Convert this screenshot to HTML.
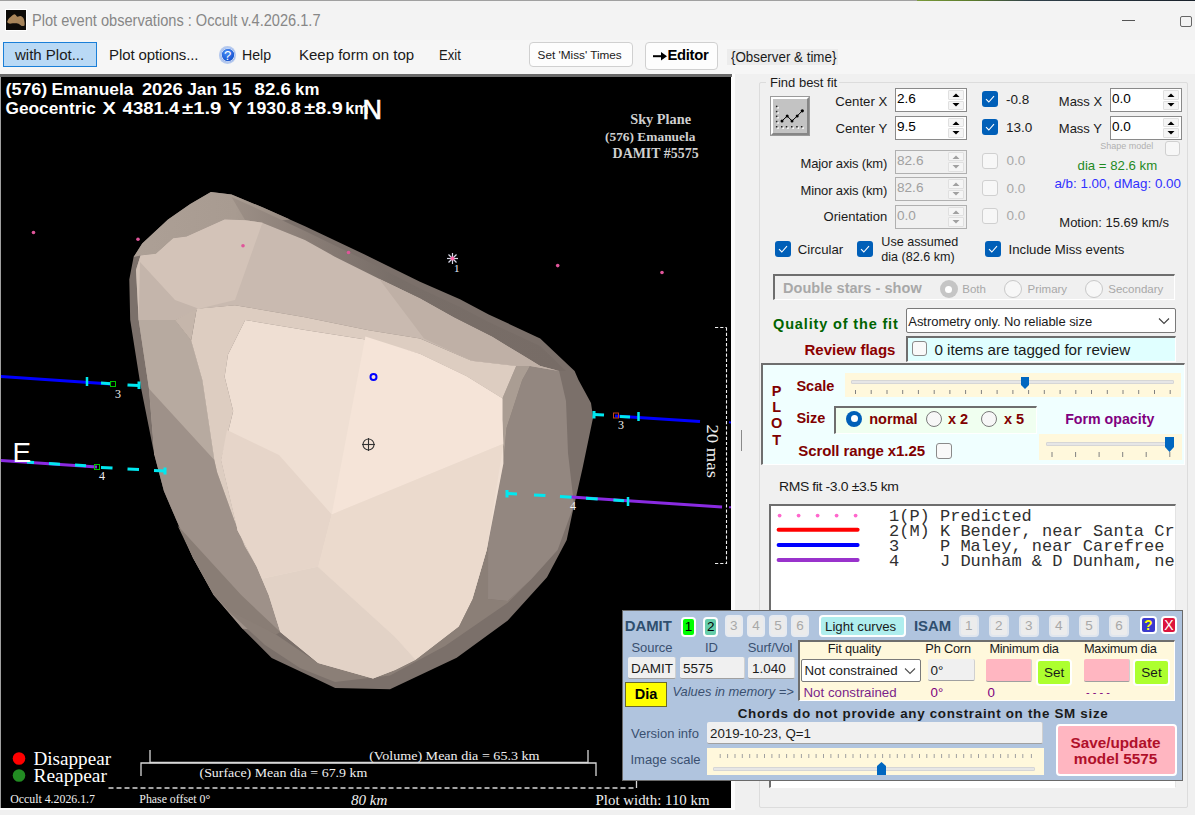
<!DOCTYPE html>
<html><head><meta charset="utf-8">
<style>
html,body{margin:0;padding:0}
body{width:1195px;height:815px;overflow:hidden;position:relative;background:#f0f0f0;font-family:"Liberation Sans",sans-serif;color:#000}
.a{position:absolute}
.t{position:absolute;white-space:pre;line-height:1}
svg text{white-space:pre}
</style></head><body>
<div class="a" style="left:0px;top:0px;width:1195px;height:1px;background:#a0a0a0;"></div>
<div class="a" style="left:917px;top:0px;width:278px;height:2px;background:linear-gradient(90deg,#7a9a3a 0%,#5a7a2a 20%,#30404a 40%,#18202a 100%);"></div>
<div class="a" style="left:0px;top:1px;width:1195px;height:39px;background:#f3f3f3;"></div>
<div class="a" style="left:5px;top:9px;width:22px;height:22px;background:#fff;"></div>
<div class="a" style="left:6px;top:10px;width:20px;height:20px;background:#0d0b08;"></div>
<svg class="a" style="left:6px;top:10px" width="20" height="20"><defs><linearGradient id="icg" x1="0" y1="0" x2="1" y2="1"><stop offset="0" stop-color="#b08a5c"/><stop offset="1" stop-color="#a08058"/></linearGradient></defs><path d="M1.2 11.8 C2 9.5 3 8 4 7.4 C5.5 6 7 4.5 8.3 4.2 C9.3 4.2 9.8 5 10.1 5.4 C10.7 6.3 11.3 6.8 11.8 6.8 C12.5 6.5 13.5 6 14.5 6 C15.6 6.3 16.6 7 17.1 7.7 C18 9 18.5 11 18.6 12.7 C18.8 14 18.6 15.2 18.3 15.7 C17.5 16.2 16.3 16.1 15.7 16 C14.3 15.3 13 14 12.1 13.6 C11 13.3 10.5 13.3 9.8 13.3 C8.5 13.3 7.5 13.2 6.8 13.3 C5.5 13.5 4.2 13.7 3.3 13.6 C2.2 13.3 1.5 12.8 1.2 11.8Z" fill="url(#icg)"/></svg>
<div class="t" style="top:12.66px;font-size:16px;color:#878787;font-family:'Liberation Sans',sans-serif;left:32.4px;transform:scaleX(0.912);transform-origin:0 0;">Plot event observations : Occult v.4.2026.1.7</div>
<div class="a" style="left:1121.5px;top:20px;width:13px;height:1px;background:#555;"></div>
<div class="a" style="left:1180px;top:15.5px;width:12px;height:11.5px;background:none;border:1px solid #666;border-radius:2px;box-sizing:border-box"></div>
<div class="a" style="left:0px;top:40px;width:1195px;height:34px;background:#f6f6f6;"></div>
<div class="a" style="left:3px;top:42px;width:94px;height:25px;background:#b9d9f5;border:1px solid #1a7fd8;box-sizing:border-box"></div>
<div class="t" style="top:47.30px;font-size:15px;color:#1a1a1a;font-family:'Liberation Sans',sans-serif;left:15px;">with Plot...</div>
<div class="t" style="top:47.30px;font-size:15px;color:#1a1a1a;font-family:'Liberation Sans',sans-serif;letter-spacing:-0.1px;left:109px;">Plot options...</div>
<div class="a" style="left:218.8px;top:46.3px;width:17.5px;height:17.5px;border-radius:50%;background:#b5c9ee"></div>
<div class="a" style="left:220.5px;top:48px;width:14px;height:14px;border-radius:50%;background:radial-gradient(circle at 40% 30%,#4d8ff5 0%,#1f5fd8 55%,#0f3fae 100%);box-shadow:0 0 0 0.8px #e8eefa inset"></div>
<div class="t" style="top:49.30px;font-size:13px;color:#fff;font-family:'Liberation Sans',sans-serif;left:227.6px;transform:translateX(-50%);">?</div>
<div class="t" style="top:46.50px;font-size:15px;color:#1a1a1a;font-family:'Liberation Sans',sans-serif;left:241.5px;transform:scaleX(0.945);transform-origin:0 0;">Help</div>
<div class="t" style="top:47.30px;font-size:15px;color:#1a1a1a;font-family:'Liberation Sans',sans-serif;left:299px;">Keep form on top</div>
<div class="t" style="top:47.30px;font-size:15px;color:#1a1a1a;font-family:'Liberation Sans',sans-serif;left:438.6px;transform:scaleX(0.87);transform-origin:0 0;">Exit</div>
<div class="a" style="left:529px;top:42px;width:104px;height:25px;background:#fdfdfd;border:1px solid #d0d0d0;border-radius:4px;box-sizing:border-box"></div>
<div class="t" style="top:49.05px;font-size:11.75px;color:#1a1a1a;font-family:'Liberation Sans',sans-serif;left:537.6px;">Set 'Miss' Times</div>
<div class="a" style="left:645px;top:42px;width:73px;height:28px;background:#fdfdfd;border:1px solid #d0d0d0;border-radius:4px;box-sizing:border-box"></div>
<svg class="a" style="left:652px;top:48.8px" width="16" height="14"><path d="M1 7.2 H12" stroke="#000" stroke-width="2"/><path d="M9 3 L15 7.2 L9 11.4Z" fill="#000"/></svg>
<div class="t" style="top:48.47px;font-size:14.8px;color:#000;font-family:'Liberation Sans',sans-serif;font-weight:bold;letter-spacing:-0.3px;left:667.5px;">Editor</div>
<div class="a" style="left:727px;top:49.2px;width:111px;height:15.5px;background:#ececec;"></div>
<div class="t" style="top:49.30px;font-size:15px;color:#1a1a1a;font-family:'Liberation Sans',sans-serif;left:730.5px;transform:scaleX(0.89);transform-origin:0 0;">{Observer &amp; time}</div>
<div class="a" style="left:0px;top:74px;width:735px;height:736px;background:#fcfcfc;"></div>
<div class="a" style="left:0px;top:74px;width:732px;height:3px;background:#6a6a6a;"></div>
<div class="a" style="left:0px;top:77px;width:1px;height:731px;background:#a0a0a0;"></div>
<div class="a" style="left:1px;top:77px;width:730px;height:730.5px;background:#000;overflow:hidden">
<svg class="a" style="left:-1px;top:-77px" width="1195" height="815">
<!-- silhouette -->
<polygon fill="#7b706a" points="210.9,191.9 231.5,194.4 262.4,207.3 305,226.2 368.7,256.4 420,281.7 460,299.3 488.7,314.4 540.2,338.4 574.6,371 578.5,380 591,403 593.1,417.6 582.7,467.6 572.3,513.6 566.7,540 547,577.3 507.8,620.5 456.7,657.8 390,689.2 335.2,688 310,676 271.7,657.9 242.5,628.7 213.7,595 193.1,558.1 179.4,527.1 163.9,491.1 154.4,455 140.5,385.3 130.2,320 129.3,279.5 133.6,257.1 142.2,243.4 168,219.4 190.3,203.9"/>
<defs>
<linearGradient id="capg" x1="130" y1="0" x2="320" y2="0" gradientUnits="userSpaceOnUse"><stop offset="0" stop-color="#ada096"/><stop offset="0.55" stop-color="#a89b91"/><stop offset="1" stop-color="#8e8279"/></linearGradient>
<linearGradient id="rimg" x1="230" y1="0" x2="560" y2="0" gradientUnits="userSpaceOnUse"><stop offset="0" stop-color="#9d9087"/><stop offset="0.25" stop-color="#887c75"/><stop offset="0.5" stop-color="#786e68"/><stop offset="1" stop-color="#776c66"/></linearGradient>
</defs>
<!-- top-left cap rim -->
<polygon fill="url(#capg)" points="133.6,257.1 142.2,243.4 168,219.4 190.3,203.9 210.9,191.9 231.5,194.4 262.4,207.3 290,219.5 262.4,222.8 245.2,220.2 224.6,219.4 186.8,236.5 173.1,238.2 155.9,253.7 140.5,255.4"/>
<!-- top rim inner tone -->
<polygon fill="url(#rimg)" points="231.5,197 262.4,211 305,231 368.7,262 420,288.5 460,307 488.7,322 540.2,346 566,371 559.1,371 540.2,365.9 523,355.6 492.1,336.7 454.4,317.8 420,298.5 379,278.7 334.4,256.4 305,240 262.4,222.8 245.2,220.2"/>
<!-- left outer dark strip + medium band -->
<polygon fill="#b7aaa0" points="140.5,255.4 155.9,253.7 173.1,238.2 186.8,236.5 200,262 174.8,320 191.1,340.6 202.3,380 214.3,460 205.1,455 149,388.7 138.7,320 136,270"/>
<polygon fill="#b7aaa0" points="138.7,320 174.8,320 191.1,340.6 202.3,380 214.3,460 154.4,455 149,388.7"/>
<polygon fill="#9e9189" points="149,388.7 214.3,460 217.1,472.2 234.3,520.3 244.6,546 256.6,566.6 268.7,595 280.3,632.1 242.5,628.7 213.7,595 193.1,558.1 179.4,527.1 163.9,491.1 154.4,455"/>
<polygon fill="#897d75" points="177.6,525.4 241.2,595 280.3,632.1 276,634.5 232.2,615 213.7,595 193.1,558.1"/>
<!-- bottom rim inner -->
<polygon fill="#8b7f77" points="226,609 276,634.5 318.1,663.1 373,678.5 395,670 415.5,659.7 458.7,626.4 472.4,598.9 488.2,540 490,540 488,598.9 507.8,600.9 531.3,579.3 507.8,602.8 445,646 390,675.5 335,682 300,668 265,645"/>
<!-- right medium-dark region -->
<polygon fill="#938780" points="522.2,380 530,365.9 559.1,371 566,400.9 568,453 574,505 557.6,550 531.3,579.3 507.8,600.9 488,598.9 488.2,540 486.7,550 503.4,463.5 506.5,428"/>
<polygon fill="#aa9d93" points="502.4,398.5 516.2,365.9 530,365.9 522.2,380 506.5,428 503.4,463.5 486.7,550 472.4,598.9 458.7,626.4 488.2,540 502.4,420"/>
<!-- upper medium band -->
<polygon fill="#c9bab0" points="186.8,236.5 224.6,219.4 245.2,220.2 262.4,222.8 305,240 334.4,256.4 379,278.7 420,298.5 454.4,317.8 492.1,336.7 523,355.6 540.2,365.9 559.1,371 530,366 516.2,365.9 471.5,360.7 420,338.4 368.7,330.3 305,317.3 234.9,305.2 198.9,308.7 174.8,320 200,262"/>
<polygon fill="#d3c3b8" points="140.5,255.4 155.9,253.7 173.1,238.2 186.8,236.5 224.6,219.4 245.2,220.2 262.4,222.8 235,300 198.9,308.7 174.8,320 138.7,320 136,270"/>
<polygon fill="#bfb0a6" points="379,278.7 420,298.5 454.4,317.8 492.1,336.7 523,355.6 540.2,365.9 559.1,371 530,366 516.2,365.9 471.5,360.7 424,338.5"/>
<polygon fill="#c4b5ab" points="140,262 175,300 198.9,308.7 174.8,320 138.7,320"/>
<!-- lighter band -->
<polygon fill="#ddcdc1" points="196.7,308.8 234.9,305.2 305,317.3 368.7,330.3 420,338.4 471.5,360.7 516.2,365.9 502.4,398.5 466.4,376.2 420,353.9 368.7,340 305,330 245.2,320 228,354.4 224.6,376.7 233.2,411 221.2,460 237.7,530.6 256.6,566.6 244.6,546 234.3,520.3 217.1,472.2 214.3,460 202.3,380 191.1,340.6 192.4,333.4"/>
<polygon fill="#c5b6ab" points="174.8,320 196.7,308.8 192.4,333.4 191.1,340.6"/>
<!-- bright region -->
<polygon fill="#efdfd3" points="245.2,320 305,330 368.7,340 420,353.9 466.4,376.2 502.4,398.5 502.4,420 503.4,463.5 486.7,550 472.4,598.9 458.7,626.4 415.5,659.7 395,670 373,678.5 318.1,663.1 280.3,632.1 268.7,595 256.6,566.6 237.7,530.6 221.2,460 233.2,411 224.6,376.7 228,354.4"/>
<!-- interior facets -->
<polygon fill="#f5e4d8" points="365.4,336.4 420,353.9 466.4,376.2 502.4,398.5 502.4,420 503.4,443.8 331.7,514.4"/>
<polygon fill="#e6d5c9" points="221.2,460 227,430 279,455 331.7,514.4 318.5,566.6 261.8,578.7 256.6,566.6 237.7,530.6"/>
<polygon fill="#ebdacd" points="331.7,514.4 503.4,443.8 486.7,550 472.4,598.9 458.7,626.4 415.5,659.7 395,637 318,567"/>
<polygon fill="#e2d2c6" points="261.8,578.7 318.5,566.6 318,567 395,637 415.5,659.7 395,670 373,678.5 318.1,663.1 280.3,632.1 268.7,595"/>
<!-- predicted path dots -->
<g fill="#e0559a">
<circle cx="33.5" cy="232.5" r="1.8"/><circle cx="138" cy="239.3" r="1.8"/><circle cx="243" cy="245.8" r="1.8"/><circle cx="348.5" cy="252.5" r="1.8"/><circle cx="557.7" cy="265.6" r="1.8"/><circle cx="662" cy="272.5" r="1.8"/>
</g>
<!-- star -->
<g stroke="#d8d8e8" stroke-width="1.2"><line x1="447" y1="258.5" x2="458" y2="258.5"/><line x1="452.5" y1="253" x2="452.5" y2="264"/><line x1="448.5" y1="254.5" x2="456.5" y2="262.5"/><line x1="456.5" y1="254.5" x2="448.5" y2="262.5"/></g>
<circle cx="452.5" cy="258.5" r="2" fill="#ff66aa"/>
<text x="454" y="272" font-family="Liberation Serif" font-size="11" fill="#e8f0ff">1</text>
<!-- center markers -->
<circle cx="373.5" cy="377" r="3" fill="none" stroke="#0000ff" stroke-width="2"/>
<g stroke="#333" stroke-width="1.1" fill="none"><circle cx="368.5" cy="444.5" r="5.5"/><line x1="362" y1="444.5" x2="375" y2="444.5"/><line x1="368.5" y1="438" x2="368.5" y2="451"/></g>
<!-- chord 3 left (blue) -->
<line x1="0" y1="376.5" x2="111" y2="384" stroke="#0000ff" stroke-width="3"/>
<line x1="101" y1="383" x2="111" y2="383.8" stroke="#00e8f0" stroke-width="3"/>
<line x1="87" y1="377" x2="87" y2="386" stroke="#00e8f0" stroke-width="2.5"/>
<rect x="110.5" y="381.5" width="5" height="5" fill="none" stroke="#00c000" stroke-width="1"/>
<line x1="127.5" y1="385" x2="139" y2="385.6" stroke="#00e8f0" stroke-width="3"/>
<line x1="139" y1="381.5" x2="139" y2="389" stroke="#00e8f0" stroke-width="3"/>
<text x="115" y="397.5" font-family="Liberation Serif" font-size="12" fill="#f0f0f0">3</text>
<!-- chord 4 left (purple) -->
<line x1="0" y1="460.5" x2="97" y2="467" stroke="#8a2be2" stroke-width="3"/>
<g stroke="#00e8f0" stroke-width="3"><line x1="27" y1="462" x2="34" y2="462.5"/><line x1="49" y1="463.5" x2="60" y2="464.2"/><line x1="75" y1="465" x2="86" y2="465.8"/><line x1="101" y1="467.5" x2="112.5" y2="468"/><line x1="127.5" y1="469" x2="139" y2="469.5"/><line x1="154" y1="470.5" x2="165" y2="471"/><line x1="165" y1="467.5" x2="165" y2="474.5"/></g>
<rect x="94.5" y="464.5" width="5" height="5" fill="none" stroke="#00c000" stroke-width="1"/>
<text x="99" y="480" font-family="Liberation Serif" font-size="12" fill="#f0f0f0">4</text>
<!-- chord 3 right -->
<line x1="615" y1="416" x2="700" y2="421.5" stroke="#0000ff" stroke-width="3"/>
<g stroke="#00e8f0" stroke-width="3"><line x1="594" y1="414.5" x2="604" y2="415"/><line x1="620" y1="416.5" x2="630" y2="417"/></g>
<line x1="594" y1="411" x2="594" y2="418.5" stroke="#00e8f0" stroke-width="3"/>
<line x1="638.5" y1="412" x2="638.5" y2="421" stroke="#00e8f0" stroke-width="2.5"/>
<rect x="613.5" y="413" width="5" height="5" fill="none" stroke="#c04020" stroke-width="1"/>
<text x="618" y="429" font-family="Liberation Serif" font-size="12" fill="#f0f0f0">3</text>
<!-- chord 4 right -->
<line x1="571" y1="497" x2="722" y2="507" stroke="#8a2be2" stroke-width="3"/>
<g stroke="#00e8f0" stroke-width="3"><line x1="507" y1="493.5" x2="517" y2="494"/><line x1="534" y1="495" x2="545.4" y2="495.6"/><line x1="560" y1="496.5" x2="571.6" y2="497.2"/><line x1="586" y1="498.2" x2="597.7" y2="499"/><line x1="613.4" y1="500" x2="624" y2="500.8"/></g>
<line x1="507" y1="490" x2="507" y2="497.5" stroke="#00e8f0" stroke-width="3"/>
<line x1="628" y1="497" x2="628" y2="506" stroke="#00e8f0" stroke-width="2.5"/>
<text x="570" y="510" font-family="Liberation Serif" font-size="12" fill="#f0f0f0">4</text>
<!-- scale bar right -->
<g stroke="#f0f0f0" stroke-width="1.1" fill="none">
<line x1="726.5" y1="327.5" x2="726.5" y2="564" stroke-dasharray="3.2,2"/>
<line x1="715" y1="327.5" x2="726.5" y2="327.5" stroke-dasharray="3.2,2"/>
<line x1="715" y1="563.5" x2="726.5" y2="563.5" stroke-dasharray="3.2,2"/>
</g>
<line x1="729" y1="422.3" x2="731" y2="422.4" stroke="#0000ff" stroke-width="2"/><line x1="729" y1="507.2" x2="731" y2="507.3" stroke="#8a2be2" stroke-width="2"/>
<text transform="translate(706.5,424.5) rotate(90)" font-family="Liberation Serif" font-size="17" fill="#f0f0f0" textLength="53.4" lengthAdjust="spacingAndGlyphs">20 mas</text>
<!-- legend -->
<circle cx="19" cy="758.5" r="6.3" fill="#ff0000"/>
<circle cx="19" cy="775.5" r="6.3" fill="#228b22"/>
<text x="33.5" y="764.5" font-family="Liberation Serif" font-size="18.3" fill="#fff" textLength="77.5" lengthAdjust="spacingAndGlyphs">Disappear</text>
<text x="33.5" y="782" font-family="Liberation Serif" font-size="18.3" fill="#fff" textLength="73.5" lengthAdjust="spacingAndGlyphs">Reappear</text>
<!-- brackets -->
<g stroke="#d8d8d8" stroke-width="1.3" fill="none">
<polyline points="141,776 141,763 596,763 596,776"/>
<polyline points="150,750 150,762.5 588,762.5 588,750"/>
<polyline points="108.5,788 636.5,788" stroke-dasharray="5,3"/>
<line x1="636.5" y1="781" x2="636.5" y2="788"/>
</g>
<text x="199.5" y="776.5" font-family="Liberation Serif" font-size="13.5" fill="#f0f0f0" textLength="167.8" lengthAdjust="spacingAndGlyphs">(Surface) Mean dia = 67.9 km</text>
<text x="369.2" y="759.5" font-family="Liberation Serif" font-size="13.5" fill="#f0f0f0" textLength="170.3" lengthAdjust="spacingAndGlyphs">(Volume) Mean dia = 65.3 km</text>
<text x="10.2" y="802.5" font-family="Liberation Serif" font-size="12" fill="#f0f0f0" textLength="84.8" lengthAdjust="spacingAndGlyphs">Occult 4.2026.1.7</text>
<text x="139.3" y="802.5" font-family="Liberation Serif" font-size="12" fill="#f0f0f0" textLength="70.9" lengthAdjust="spacingAndGlyphs">Phase offset 0°</text>
<text x="351" y="804.5" font-family="Liberation Serif" font-size="15" font-style="italic" fill="#f0f0f0" textLength="36.4" lengthAdjust="spacingAndGlyphs">80 km</text>
<text x="595.6" y="804.5" font-family="Liberation Serif" font-size="15" fill="#f0f0f0" textLength="113.9" lengthAdjust="spacingAndGlyphs">Plot width: 110 km</text>
<!-- sky plane -->
<text x="630.2" y="123.8" font-family="Liberation Serif" font-size="15.5" font-weight="bold" fill="#d0d0d0" textLength="60.8" lengthAdjust="spacingAndGlyphs">Sky Plane</text>
<text x="605" y="141" font-family="Liberation Serif" font-size="13" font-weight="bold" fill="#d0d0d0" textLength="90.4" lengthAdjust="spacingAndGlyphs">(576) Emanuela</text>
<text x="612.6" y="158" font-family="Liberation Serif" font-size="14.5" font-weight="bold" fill="#d0d0d0" textLength="86" lengthAdjust="spacingAndGlyphs">DAMIT #5575</text>
<!-- header -->
<text x="5.5" y="94.7" font-family="Liberation Sans" font-size="16.3" font-weight="bold" fill="#fff" textLength="41.8" lengthAdjust="spacingAndGlyphs">(576)</text>
<text x="51.5" y="94.7" font-family="Liberation Sans" font-size="16.3" font-weight="bold" fill="#fff" textLength="81.9" lengthAdjust="spacingAndGlyphs">Emanuela</text>
<text x="141.9" y="94.7" font-family="Liberation Sans" font-size="16.3" font-weight="bold" fill="#fff" textLength="40.9" lengthAdjust="spacingAndGlyphs">2026</text>
<text x="187.2" y="94.7" font-family="Liberation Sans" font-size="16.3" font-weight="bold" fill="#fff" textLength="30.0" lengthAdjust="spacingAndGlyphs">Jan</text>
<text x="222.29999999999998" y="94.7" font-family="Liberation Sans" font-size="16.3" font-weight="bold" fill="#fff" textLength="19.2" lengthAdjust="spacingAndGlyphs">15</text>
<text x="254.6" y="94.7" font-family="Liberation Sans" font-size="16.3" font-weight="bold" fill="#fff" textLength="36.3" lengthAdjust="spacingAndGlyphs">82.6</text>
<text x="295.1" y="94.7" font-family="Liberation Sans" font-size="16.3" font-weight="bold" fill="#fff" textLength="24.3" lengthAdjust="spacingAndGlyphs">km</text>
<text x="5.5" y="114.2" font-family="Liberation Sans" font-size="16.3" font-weight="bold" fill="#fff" textLength="90.3" lengthAdjust="spacingAndGlyphs">Geocentric</text>
<text x="102.5" y="114.2" font-family="Liberation Sans" font-size="16.3" font-weight="bold" fill="#fff" textLength="13.4" lengthAdjust="spacingAndGlyphs">X</text>
<text x="122.6" y="114.2" font-family="Liberation Sans" font-size="16.3" font-weight="bold" fill="#fff" textLength="56.8" lengthAdjust="spacingAndGlyphs">4381.4</text>
<text x="182.1" y="114.2" font-family="Liberation Sans" font-size="16.3" font-weight="bold" fill="#fff" textLength="39.3" lengthAdjust="spacingAndGlyphs">±1.9</text>
<text x="228.2" y="114.2" font-family="Liberation Sans" font-size="16.3" font-weight="bold" fill="#fff" textLength="14.2" lengthAdjust="spacingAndGlyphs">Y</text>
<text x="246.6" y="114.2" font-family="Liberation Sans" font-size="16.3" font-weight="bold" fill="#fff" textLength="54.3" lengthAdjust="spacingAndGlyphs">1930.8</text>
<text x="304.3" y="114.2" font-family="Liberation Sans" font-size="16.3" font-weight="bold" fill="#fff" textLength="38.5" lengthAdjust="spacingAndGlyphs">±8.9</text>
<text x="345.3" y="114.2" font-family="Liberation Sans" font-size="16.3" font-weight="bold" fill="#fff" textLength="23.5" lengthAdjust="spacingAndGlyphs">km</text>
<text x="362.5" y="119.3" font-family="Liberation Sans" font-size="27.5" fill="#fff" stroke="#fff" stroke-width="0.7" textLength="19.5" lengthAdjust="spacingAndGlyphs">N</text>
<text x="12.5" y="462" font-family="Liberation Sans" font-size="28.5" fill="#fff" textLength="18.6" lengthAdjust="spacingAndGlyphs">E</text>
</svg>

</div>
<div class="a" style="left:741px;top:430px;width:1px;height:21px;background:#8a8a8a;"></div>
<div class="a" style="left:759px;top:82px;width:429px;height:726px;border:1px solid #dcdcdc;border-radius:2px;box-sizing:border-box"></div>
<div class="a" style="left:766px;top:76px;width:73px;height:12px;background:#f0f0f0;"></div>
<div class="t" style="top:75.50px;font-size:13px;color:#1a1a1a;font-family:'Liberation Sans',sans-serif;left:770px;transform:scaleX(1.0);transform-origin:0 0;">Find best fit</div>
<div class="a" style="left:770px;top:96.2px;width:39.5px;height:39.5px;background:#c3c3c3;border:1px solid #9a9a9a;box-sizing:border-box"></div>
<div class="a" style="left:771px;top:97.2px;width:37.5px;height:37.5px;border-top:2.5px solid #fff;border-left:2.5px solid #fff;border-right:2.5px solid #868686;border-bottom:2.5px solid #868686;box-sizing:border-box"></div>
<svg class="a" style="left:770px;top:96px" width="40" height="40">
<g fill="#fff"><rect x="7.2" y="11.0" width="1.6" height="1.6"/><rect x="7.2" y="16.1" width="1.6" height="1.6"/><rect x="7.2" y="20.9" width="1.6" height="1.6"/><rect x="7.2" y="26.1" width="1.6" height="1.6"/><rect x="7.2" y="31.3" width="1.6" height="1.6"/><rect x="12.3" y="31.3" width="1.6" height="1.6"/><rect x="17.1" y="31.3" width="1.6" height="1.6"/><rect x="22.3" y="31.3" width="1.6" height="1.6"/><rect x="27.5" y="31.3" width="1.6" height="1.6"/><rect x="32.2" y="31.3" width="1.6" height="1.6"/></g>
<g fill="#222"><rect x="5.9" y="9.7" width="1.5" height="1.5"/><rect x="5.9" y="14.8" width="1.5" height="1.5"/><rect x="5.9" y="19.6" width="1.5" height="1.5"/><rect x="5.9" y="24.8" width="1.5" height="1.5"/><rect x="5.9" y="30.0" width="1.5" height="1.5"/><rect x="11.0" y="30.0" width="1.5" height="1.5"/><rect x="15.8" y="30.0" width="1.5" height="1.5"/><rect x="21.0" y="30.0" width="1.5" height="1.5"/><rect x="26.2" y="30.0" width="1.5" height="1.5"/><rect x="30.9" y="30.0" width="1.5" height="1.5"/></g>
<polyline points="12,25 17.2,20 22,25 27.2,20 32.3,14.8" fill="none" stroke="#000" stroke-width="1"/>
<g fill="#000"><circle cx="12" cy="25" r="1.5"/><circle cx="17.2" cy="20" r="1.5"/><circle cx="22" cy="25" r="1.5"/><circle cx="27.2" cy="20" r="1.5"/><circle cx="32.3" cy="14.8" r="1.6"/></g>
</svg>
<div class="t" style="top:94.83px;font-size:13.2px;color:#1a1a1a;font-family:'Liberation Sans',sans-serif;right:307.70000000000005px;">Center X</div>
<div class="t" style="top:122.13px;font-size:13.2px;color:#1a1a1a;font-family:'Liberation Sans',sans-serif;right:307.70000000000005px;">Center Y</div>
<div class="t" style="top:156.60px;font-size:13px;color:#1a1a1a;font-family:'Liberation Sans',sans-serif;letter-spacing:-0.15px;right:307.79999999999995px;">Major axis (km)</div>
<div class="t" style="top:183.70px;font-size:13px;color:#1a1a1a;font-family:'Liberation Sans',sans-serif;letter-spacing:-0.15px;right:307.79999999999995px;">Minor axis (km)</div>
<div class="t" style="top:210.20px;font-size:13px;color:#1a1a1a;font-family:'Liberation Sans',sans-serif;right:307.79999999999995px;">Orientation</div>
<div class="a" style="left:895px;top:88px;width:72px;height:24px;background:#fff;border:1px solid #8a8a8a;box-sizing:border-box"></div>
<div class="a" style="left:948px;top:90px;width:16px;height:9.5px;background:#f5f5f5;border:1px solid #e0e0e0;box-sizing:border-box;border-radius:1px"></div>
<div class="a" style="left:948px;top:100.5px;width:16px;height:9.5px;background:#f5f5f5;border:1px solid #e0e0e0;box-sizing:border-box;border-radius:1px"></div>
<svg class="a" style="left:948px;top:90px" width="16" height="20"><path d="M4.5 7 L8 3.5 L11.5 7Z" fill="#000"/><path d="M4.5 13 L8 16.5 L11.5 13Z" fill="#000"/></svg>
<div class="t" style="top:92.09px;font-size:13.6px;color:#000;font-family:'Liberation Sans',sans-serif;left:897px;">2.6</div>
<div class="a" style="left:895px;top:115.5px;width:72px;height:24px;background:#fff;border:1px solid #8a8a8a;box-sizing:border-box"></div>
<div class="a" style="left:948px;top:117.5px;width:16px;height:9.5px;background:#f5f5f5;border:1px solid #e0e0e0;box-sizing:border-box;border-radius:1px"></div>
<div class="a" style="left:948px;top:128.0px;width:16px;height:9.5px;background:#f5f5f5;border:1px solid #e0e0e0;box-sizing:border-box;border-radius:1px"></div>
<svg class="a" style="left:948px;top:117.5px" width="16" height="20"><path d="M4.5 7 L8 3.5 L11.5 7Z" fill="#000"/><path d="M4.5 13 L8 16.5 L11.5 13Z" fill="#000"/></svg>
<div class="t" style="top:119.59px;font-size:13.6px;color:#000;font-family:'Liberation Sans',sans-serif;left:897px;">9.5</div>
<div class="a" style="left:895px;top:149.5px;width:72px;height:24px;background:#f0f0f0;border:1px solid #b0b0b0;box-sizing:border-box"></div>
<div class="a" style="left:948px;top:151.5px;width:16px;height:9.5px;background:#f5f5f5;border:1px solid #e0e0e0;box-sizing:border-box;border-radius:1px"></div>
<div class="a" style="left:948px;top:162.0px;width:16px;height:9.5px;background:#f5f5f5;border:1px solid #e0e0e0;box-sizing:border-box;border-radius:1px"></div>
<svg class="a" style="left:948px;top:151.5px" width="16" height="20"><path d="M4.5 7 L8 3.5 L11.5 7Z" fill="#a0a0a0"/><path d="M4.5 13 L8 16.5 L11.5 13Z" fill="#a0a0a0"/></svg>
<div class="t" style="top:153.59px;font-size:13.6px;color:#a0a0a0;font-family:'Liberation Sans',sans-serif;left:897px;">82.6</div>
<div class="a" style="left:895px;top:177px;width:72px;height:24px;background:#f0f0f0;border:1px solid #b0b0b0;box-sizing:border-box"></div>
<div class="a" style="left:948px;top:179px;width:16px;height:9.5px;background:#f5f5f5;border:1px solid #e0e0e0;box-sizing:border-box;border-radius:1px"></div>
<div class="a" style="left:948px;top:189.5px;width:16px;height:9.5px;background:#f5f5f5;border:1px solid #e0e0e0;box-sizing:border-box;border-radius:1px"></div>
<svg class="a" style="left:948px;top:179px" width="16" height="20"><path d="M4.5 7 L8 3.5 L11.5 7Z" fill="#a0a0a0"/><path d="M4.5 13 L8 16.5 L11.5 13Z" fill="#a0a0a0"/></svg>
<div class="t" style="top:181.09px;font-size:13.6px;color:#a0a0a0;font-family:'Liberation Sans',sans-serif;left:897px;">82.6</div>
<div class="a" style="left:895px;top:204.5px;width:72px;height:24px;background:#f0f0f0;border:1px solid #b0b0b0;box-sizing:border-box"></div>
<div class="a" style="left:948px;top:206.5px;width:16px;height:9.5px;background:#f5f5f5;border:1px solid #e0e0e0;box-sizing:border-box;border-radius:1px"></div>
<div class="a" style="left:948px;top:217.0px;width:16px;height:9.5px;background:#f5f5f5;border:1px solid #e0e0e0;box-sizing:border-box;border-radius:1px"></div>
<svg class="a" style="left:948px;top:206.5px" width="16" height="20"><path d="M4.5 7 L8 3.5 L11.5 7Z" fill="#a0a0a0"/><path d="M4.5 13 L8 16.5 L11.5 13Z" fill="#a0a0a0"/></svg>
<div class="t" style="top:208.59px;font-size:13.6px;color:#a0a0a0;font-family:'Liberation Sans',sans-serif;left:897px;">0.0</div>
<div class="a" style="left:982px;top:91.3px;width:16px;height:16px;border-radius:3px;background:#005fb8"><svg width="16" height="16" style="position:absolute;left:0;top:0"><path d="M4 8.2 L6.8 11 L12 5.2" fill="none" stroke="#fff" stroke-width="1.1"/></svg></div>
<div class="a" style="left:982px;top:118.6px;width:16px;height:16px;border-radius:3px;background:#005fb8"><svg width="16" height="16" style="position:absolute;left:0;top:0"><path d="M4 8.2 L6.8 11 L12 5.2" fill="none" stroke="#fff" stroke-width="1.1"/></svg></div>
<div class="a" style="left:982px;top:153px;width:16px;height:16px;border-radius:3px;background:#f7f7f7;border:1px solid #d0d0d0;box-sizing:border-box"></div>
<div class="a" style="left:982px;top:180px;width:16px;height:16px;border-radius:3px;background:#f7f7f7;border:1px solid #d0d0d0;box-sizing:border-box"></div>
<div class="a" style="left:982px;top:207.5px;width:16px;height:16px;border-radius:3px;background:#f7f7f7;border:1px solid #d0d0d0;box-sizing:border-box"></div>
<div class="t" style="top:93.47px;font-size:13.5px;color:#1a1a1a;font-family:'Liberation Sans',sans-serif;left:1005.9px;">-0.8</div>
<div class="t" style="top:121.07px;font-size:13.5px;color:#1a1a1a;font-family:'Liberation Sans',sans-serif;left:1005.9px;">13.0</div>
<div class="t" style="top:154.17px;font-size:13.5px;color:#a8a8a8;font-family:'Liberation Sans',sans-serif;left:1006.4px;">0.0</div>
<div class="t" style="top:181.77px;font-size:13.5px;color:#a8a8a8;font-family:'Liberation Sans',sans-serif;left:1006.4px;">0.0</div>
<div class="t" style="top:208.67px;font-size:13.5px;color:#a8a8a8;font-family:'Liberation Sans',sans-serif;left:1006.4px;">0.0</div>
<div class="t" style="top:95.00px;font-size:13px;color:#1a1a1a;font-family:'Liberation Sans',sans-serif;left:1058.8px;">Mass X</div>
<div class="t" style="top:122.30px;font-size:13px;color:#1a1a1a;font-family:'Liberation Sans',sans-serif;left:1058.8px;">Mass Y</div>
<div class="a" style="left:1110px;top:88px;width:72px;height:24px;background:#fff;border:1px solid #8a8a8a;box-sizing:border-box"></div>
<div class="a" style="left:1163px;top:90px;width:16px;height:9.5px;background:#f5f5f5;border:1px solid #e0e0e0;box-sizing:border-box;border-radius:1px"></div>
<div class="a" style="left:1163px;top:100.5px;width:16px;height:9.5px;background:#f5f5f5;border:1px solid #e0e0e0;box-sizing:border-box;border-radius:1px"></div>
<svg class="a" style="left:1163px;top:90px" width="16" height="20"><path d="M4.5 7 L8 3.5 L11.5 7Z" fill="#000"/><path d="M4.5 13 L8 16.5 L11.5 13Z" fill="#000"/></svg>
<div class="t" style="top:92.09px;font-size:13.6px;color:#000;font-family:'Liberation Sans',sans-serif;left:1112px;">0.0</div>
<div class="a" style="left:1110px;top:115.5px;width:72px;height:24px;background:#fff;border:1px solid #8a8a8a;box-sizing:border-box"></div>
<div class="a" style="left:1163px;top:117.5px;width:16px;height:9.5px;background:#f5f5f5;border:1px solid #e0e0e0;box-sizing:border-box;border-radius:1px"></div>
<div class="a" style="left:1163px;top:128.0px;width:16px;height:9.5px;background:#f5f5f5;border:1px solid #e0e0e0;box-sizing:border-box;border-radius:1px"></div>
<svg class="a" style="left:1163px;top:117.5px" width="16" height="20"><path d="M4.5 7 L8 3.5 L11.5 7Z" fill="#000"/><path d="M4.5 13 L8 16.5 L11.5 13Z" fill="#000"/></svg>
<div class="t" style="top:119.59px;font-size:13.6px;color:#000;font-family:'Liberation Sans',sans-serif;left:1112px;">0.0</div>
<div class="t" style="top:142.38px;font-size:9px;color:#b0b0b0;font-family:'Liberation Sans',sans-serif;left:1100.3px;transform:scaleX(1.0);transform-origin:0 0;">Shape model</div>
<div class="a" style="left:1164.5px;top:141px;width:15px;height:15px;border-radius:3px;background:#f7f7f7;border:1px solid #d0d0d0;box-sizing:border-box"></div>
<div class="t" style="top:159.33px;font-size:13.2px;color:#1f8a1f;font-family:'Liberation Sans',sans-serif;left:1077.6px;">dia = 82.6 km</div>
<div class="t" style="top:177.16px;font-size:13.4px;color:#3030ff;font-family:'Liberation Sans',sans-serif;left:1054.4px;">a/b: 1.00, dMag: 0.00</div>
<div class="t" style="top:215.50px;font-size:13px;color:#1a1a1a;font-family:'Liberation Sans',sans-serif;left:1059.3px;">Motion: 15.69 km/s</div>
<div class="a" style="left:774.7px;top:241.2px;width:16px;height:16px;border-radius:3px;background:#005fb8"><svg width="16" height="16" style="position:absolute;left:0;top:0"><path d="M4 8.2 L6.8 11 L12 5.2" fill="none" stroke="#fff" stroke-width="1.1"/></svg></div>
<div class="t" style="top:242.83px;font-size:13.2px;color:#1a1a1a;font-family:'Liberation Sans',sans-serif;left:797.7px;">Circular</div>
<div class="a" style="left:857px;top:241.2px;width:16px;height:16px;border-radius:3px;background:#005fb8"><svg width="16" height="16" style="position:absolute;left:0;top:0"><path d="M4 8.2 L6.8 11 L12 5.2" fill="none" stroke="#fff" stroke-width="1.1"/></svg></div>
<div class="t" style="top:236.33px;font-size:12.6px;color:#1a1a1a;font-family:'Liberation Sans',sans-serif;left:881.3px;">Use assumed</div>
<div class="t" style="top:251.33px;font-size:12.6px;color:#1a1a1a;font-family:'Liberation Sans',sans-serif;left:881.3px;">dia (82.6 km)</div>
<div class="a" style="left:984.7px;top:241.3px;width:16px;height:16px;border-radius:3px;background:#005fb8"><svg width="16" height="16" style="position:absolute;left:0;top:0"><path d="M4 8.2 L6.8 11 L12 5.2" fill="none" stroke="#fff" stroke-width="1.1"/></svg></div>
<div class="t" style="top:242.83px;font-size:13.2px;color:#1a1a1a;font-family:'Liberation Sans',sans-serif;left:1008.6px;">Include Miss events</div>
<div class="a" style="left:772.5px;top:274px;width:402px;height:26px;background:#f0f0f0;border-top:2px solid #6e6e6e;border-left:2px solid #6e6e6e;border-bottom:1px solid #fff;border-right:1px solid #fff;box-sizing:border-box"></div>
<div class="t" style="top:281.23px;font-size:14.5px;color:#a8a8a8;font-family:'Liberation Sans',sans-serif;font-weight:bold;letter-spacing:0.05px;left:783px;">Double stars - show</div>
<div class="a" style="left:939.5px;top:280px;width:18px;height:18px;border-radius:50%;background:#c5c5c5;box-sizing:border-box"><div class="a" style="left:5.5px;top:5.5px;width:7px;height:7px;border-radius:50%;background:#fff"></div></div>
<div class="t" style="top:284.27px;font-size:11.5px;color:#a8a8a8;font-family:'Liberation Sans',sans-serif;left:962.3px;">Both</div>
<div class="a" style="left:1004px;top:280px;width:18px;height:18px;border-radius:50%;background:#f7f7f7;border:1px solid #c8c8c8;box-sizing:border-box"></div>
<div class="t" style="top:284.27px;font-size:11.5px;color:#a8a8a8;font-family:'Liberation Sans',sans-serif;left:1027.5px;">Primary</div>
<div class="a" style="left:1085px;top:280px;width:18px;height:18px;border-radius:50%;background:#f7f7f7;border:1px solid #c8c8c8;box-sizing:border-box"></div>
<div class="t" style="top:284.27px;font-size:11.5px;color:#a8a8a8;font-family:'Liberation Sans',sans-serif;left:1108.3px;">Secondary</div>
<div class="t" style="top:316.53px;font-size:14.5px;color:#006400;font-family:'Liberation Sans',sans-serif;font-weight:bold;letter-spacing:0.85px;left:773px;">Quality of the fit</div>
<div class="a" style="left:905.5px;top:308.3px;width:270px;height:25px;background:#fff;border:1px solid #7a7a7a;border-radius:2px;box-sizing:border-box"></div>
<div class="t" style="top:314.50px;font-size:13px;color:#1a1a1a;font-family:'Liberation Sans',sans-serif;letter-spacing:-0.05px;left:908.3px;">Astrometry only. No reliable size</div>
<svg class="a" style="left:1158px;top:316px" width="12" height="10"><path d="M1 2.5 L6 7.5 L11 2.5" fill="none" stroke="#404040" stroke-width="1.1"/></svg>
<div class="t" style="top:341.60px;font-size:15px;color:#8b0000;font-family:'Liberation Sans',sans-serif;font-weight:bold;right:299.6px;transform:scaleX(1.0);transform-origin:100% 0;">Review flags</div>
<div class="a" style="left:905.5px;top:335.5px;width:270px;height:26px;background:#e0ffff;border-top:2px solid #6e6e6e;border-left:2px solid #6e6e6e;border-bottom:1px solid #fff;border-right:1px solid #fff;box-sizing:border-box"></div>
<div class="a" style="left:912px;top:341px;width:15px;height:15px;border-radius:3px;background:#f9f9f9;border:1px solid #8a8a8a;box-sizing:border-box"></div>
<div class="t" style="top:341.63px;font-size:15.2px;color:#1a1a1a;font-family:'Liberation Sans',sans-serif;left:934.4px;">0 items are tagged for review</div>
<div class="a" style="left:761.4px;top:363.3px;width:424px;height:101.5px;background:#f0ffff;border-top:2px solid #6e6e6e;border-left:2px solid #6e6e6e;border-bottom:1px solid #fff;border-right:1px solid #fff;box-sizing:border-box"></div>
<div class="t" style="top:383.93px;font-size:14.5px;color:#800000;font-family:'Liberation Sans',sans-serif;font-weight:bold;left:776.6px;transform:translateX(-50%);">P</div>
<div class="t" style="top:400.43px;font-size:14.5px;color:#800000;font-family:'Liberation Sans',sans-serif;font-weight:bold;left:776.6px;transform:translateX(-50%);">L</div>
<div class="t" style="top:415.93px;font-size:14.5px;color:#800000;font-family:'Liberation Sans',sans-serif;font-weight:bold;left:776.6px;transform:translateX(-50%);">O</div>
<div class="t" style="top:432.63px;font-size:14.5px;color:#800000;font-family:'Liberation Sans',sans-serif;font-weight:bold;left:776.6px;transform:translateX(-50%);">T</div>
<div class="t" style="top:379.23px;font-size:14.5px;color:#800000;font-family:'Liberation Sans',sans-serif;font-weight:bold;left:796.4px;">Scale</div>
<div class="a" style="left:845px;top:373.4px;width:336px;height:24px;background:#fff8dc;"></div>
<div class="a" style="left:851px;top:380px;width:323px;height:4px;background:#e6e6e6;border:1px solid #d6d6d6;box-sizing:border-box;border-radius:1px"></div>
<svg class="a" style="left:845px;top:388px" width="336" height="9"><g stroke="#808080" stroke-width="1"><line x1="10.5" y1="2" x2="10.5" y2="6"/><line x1="26.2" y1="2" x2="26.2" y2="6"/><line x1="42.0" y1="2" x2="42.0" y2="6"/><line x1="57.7" y1="2" x2="57.7" y2="6"/><line x1="73.4" y1="2" x2="73.4" y2="6"/><line x1="89.2" y1="2" x2="89.2" y2="6"/><line x1="104.9" y1="2" x2="104.9" y2="6"/><line x1="120.6" y1="2" x2="120.6" y2="6"/><line x1="136.4" y1="2" x2="136.4" y2="6"/><line x1="152.1" y1="2" x2="152.1" y2="6"/><line x1="167.9" y1="2" x2="167.9" y2="6"/><line x1="183.6" y1="2" x2="183.6" y2="6"/><line x1="199.3" y1="2" x2="199.3" y2="6"/><line x1="215.1" y1="2" x2="215.1" y2="6"/><line x1="230.8" y1="2" x2="230.8" y2="6"/><line x1="246.5" y1="2" x2="246.5" y2="6"/><line x1="262.3" y1="2" x2="262.3" y2="6"/><line x1="278.0" y1="2" x2="278.0" y2="6"/><line x1="293.7" y1="2" x2="293.7" y2="6"/><line x1="309.5" y1="2" x2="309.5" y2="6"/><line x1="325.2" y1="2" x2="325.2" y2="6"/></g></svg>
<svg class="a" style="left:1020px;top:376px" width="10" height="14"><path d="M1 1 H9 V9 L5 13 L1 9Z" fill="#0067c0"/></svg>
<div class="t" style="top:411.23px;font-size:14.5px;color:#800000;font-family:'Liberation Sans',sans-serif;font-weight:bold;left:796.4px;">Size</div>
<div class="a" style="left:834.2px;top:405.6px;width:202.5px;height:28px;background:#f0fff0;border-top:2px solid #6e6e6e;border-left:2px solid #6e6e6e;border-bottom:1px solid #fff;border-right:1px solid #fff;box-sizing:border-box"></div>
<div class="a" style="left:846px;top:410.5px;width:16px;height:16px;border-radius:50%;background:#005fb8;box-sizing:border-box"><div class="a" style="left:4.5px;top:4.5px;width:7px;height:7px;border-radius:50%;background:#fff"></div></div>
<div class="t" style="top:411.73px;font-size:14.5px;color:#800000;font-family:'Liberation Sans',sans-serif;font-weight:bold;left:869.2px;">normal</div>
<div class="a" style="left:926px;top:410.5px;width:16px;height:16px;border-radius:50%;background:#f7f7f7;border:1px solid #7a7a7a;box-sizing:border-box"></div>
<div class="t" style="top:411.73px;font-size:14.5px;color:#800000;font-family:'Liberation Sans',sans-serif;font-weight:bold;left:948px;">x 2</div>
<div class="a" style="left:981px;top:410.5px;width:16px;height:16px;border-radius:50%;background:#f7f7f7;border:1px solid #7a7a7a;box-sizing:border-box"></div>
<div class="t" style="top:411.73px;font-size:14.5px;color:#800000;font-family:'Liberation Sans',sans-serif;font-weight:bold;left:1004px;">x 5</div>
<div class="t" style="top:412.48px;font-size:14.2px;color:#800080;font-family:'Liberation Sans',sans-serif;font-weight:bold;left:1065.2px;">Form opacity</div>
<div class="t" style="top:443.30px;font-size:15px;color:#800000;font-family:'Liberation Sans',sans-serif;font-weight:bold;letter-spacing:-0.1px;left:798.3px;">Scroll range x1.25</div>
<div class="a" style="left:936.4px;top:443.4px;width:16px;height:16px;border-radius:3px;background:#f9f9f9;border:1px solid #8a8a8a;box-sizing:border-box"></div>
<div class="a" style="left:1038.5px;top:433.8px;width:143.5px;height:26.5px;background:#fff8dc;"></div>
<div class="a" style="left:1046px;top:442px;width:127px;height:4px;background:#e6e6e6;border:1px solid #d6d6d6;box-sizing:border-box;border-radius:1px"></div>
<svg class="a" style="left:1038.5px;top:450px" width="144" height="10"><g stroke="#808080" stroke-width="1"><line x1="13.0" y1="2" x2="13.0" y2="7"/><line x1="36.6" y1="2" x2="36.6" y2="7"/><line x1="60.1" y1="2" x2="60.1" y2="7"/><line x1="83.7" y1="2" x2="83.7" y2="7"/><line x1="107.2" y1="2" x2="107.2" y2="7"/><line x1="130.8" y1="2" x2="130.8" y2="7"/></g></svg>
<svg class="a" style="left:1163.5px;top:436px" width="11" height="17"><path d="M1 1 H10 V11 L5.5 16 L1 11Z" fill="#0067c0"/></svg>
<div class="t" style="top:480.41px;font-size:13.1px;color:#1a1a1a;font-family:'Liberation Sans',sans-serif;letter-spacing:-0.35px;left:779px;transform:scaleX(1.065);transform-origin:0 0;">RMS fit -3.0 ±3.5 km</div>
<div class="a" style="left:769.4px;top:504px;width:407px;height:284px;background:#fff;border-top:2px solid #6e6e6e;border-left:2px solid #6e6e6e;border-bottom:1.5px solid #fff;border-right:1px solid #e3e3e3;box-sizing:border-box;overflow:hidden">
<div class="a" style="left:771.4px;top:780px;width:404px;height:6px;background:#f0f0f0;"></div>
<div class="a" style="left:0;top:0;width:405px;height:281px">
</div></div>
<svg class="a" style="left:769.4px;top:504px" width="407" height="80"><circle cx="10.6" cy="11.6" r="1.9" fill="#ff66cc"/><circle cx="29.6" cy="11.6" r="1.9" fill="#ff66cc"/><circle cx="48.6" cy="11.6" r="1.9" fill="#ff66cc"/><circle cx="67.6" cy="11.6" r="1.9" fill="#ff66cc"/><circle cx="86.6" cy="11.6" r="1.9" fill="#ff66cc"/><line x1="9.600000000000023" y1="25.799999999999955" x2="88.60000000000002" y2="25.799999999999955" stroke="#ff0000" stroke-width="4" stroke-linecap="round"/><line x1="9.600000000000023" y1="41" x2="88.60000000000002" y2="41" stroke="#0000ff" stroke-width="4" stroke-linecap="round"/><line x1="9.600000000000023" y1="56" x2="88.60000000000002" y2="56" stroke="#9932cc" stroke-width="4" stroke-linecap="round"/></svg>
<div class="a" style="left:771px;top:506px;width:404px;height:279px;overflow:hidden">
<div class="t" style="left:118px;top:2.37px;font-family:'Liberation Mono',monospace;font-size:17px;color:#303030">1(P) Predicted</div>
<div class="t" style="left:118px;top:17.27px;font-family:'Liberation Mono',monospace;font-size:17px;color:#303030">2(M) K Bender, near Santa Cruz</div>
<div class="t" style="left:118px;top:32.17px;font-family:'Liberation Mono',monospace;font-size:17px;color:#303030">3    P Maley, near Carefree</div>
<div class="t" style="left:118px;top:47.07px;font-family:'Liberation Mono',monospace;font-size:17px;color:#303030">4    J Dunham &amp; D Dunham, near</div>
</div>
<div class="a" style="left:621.7px;top:610px;width:561.6px;height:170.5px;background:#b0c4de;border:1.5px solid #6a6a6a;box-sizing:border-box"></div>
<div class="t" style="top:619.39px;font-size:14.9px;color:#2f4f6f;font-family:'Liberation Sans',sans-serif;font-weight:bold;left:624.7px;">DAMIT</div>
<div class="a" style="left:680.8px;top:616.5px;width:15.5px;height:20px;background:#00ff00;border:2px solid #fff;border-radius:4px;box-sizing:border-box"></div>
<div class="t" style="top:620.07px;font-size:13.5px;color:#000;font-family:'Liberation Sans',sans-serif;left:688.55px;transform:translateX(-50%);">1</div>
<div class="a" style="left:702.9px;top:616.5px;width:15.5px;height:20px;background:#66cdaa;border:2px solid #fff;border-radius:4px;box-sizing:border-box"></div>
<div class="t" style="top:620.07px;font-size:13.5px;color:#000;font-family:'Liberation Sans',sans-serif;left:710.65px;transform:translateX(-50%);">2</div>
<div class="a" style="left:724.8px;top:614.8px;width:18px;height:22px;background:#ebebeb;border:2px solid #e6eaf0;border-radius:4px;box-sizing:border-box"></div>
<div class="t" style="top:619.37px;font-size:13.5px;color:#a8a8a8;font-family:'Liberation Sans',sans-serif;left:733.8px;transform:translateX(-50%);">3</div>
<div class="a" style="left:746.9px;top:614.8px;width:18px;height:22px;background:#ebebeb;border:2px solid #e6eaf0;border-radius:4px;box-sizing:border-box"></div>
<div class="t" style="top:619.37px;font-size:13.5px;color:#a8a8a8;font-family:'Liberation Sans',sans-serif;left:755.9px;transform:translateX(-50%);">4</div>
<div class="a" style="left:769.0px;top:614.8px;width:18px;height:22px;background:#ebebeb;border:2px solid #e6eaf0;border-radius:4px;box-sizing:border-box"></div>
<div class="t" style="top:619.37px;font-size:13.5px;color:#a8a8a8;font-family:'Liberation Sans',sans-serif;left:778.0px;transform:translateX(-50%);">5</div>
<div class="a" style="left:791.0999999999999px;top:614.8px;width:18px;height:22px;background:#ebebeb;border:2px solid #e6eaf0;border-radius:4px;box-sizing:border-box"></div>
<div class="t" style="top:619.37px;font-size:13.5px;color:#a8a8a8;font-family:'Liberation Sans',sans-serif;left:800.0999999999999px;transform:translateX(-50%);">6</div>
<div class="a" style="left:819px;top:615.2px;width:87px;height:22px;background:#afeeee;border:2px solid #fff;border-radius:4px;box-sizing:border-box"></div>
<div class="t" style="top:619.83px;font-size:13.2px;color:#1a1a1a;font-family:'Liberation Sans',sans-serif;left:825.1px;">Light curves</div>
<div class="t" style="top:619.39px;font-size:14.9px;color:#2f4f6f;font-family:'Liberation Sans',sans-serif;font-weight:bold;left:913.9px;">ISAM</div>
<div class="a" style="left:958.7px;top:614.5px;width:20px;height:22px;background:#ececec;border:2px solid #e0e6ee;border-radius:4px;box-sizing:border-box"></div>
<div class="t" style="top:619.07px;font-size:13.5px;color:#a8a8a8;font-family:'Liberation Sans',sans-serif;left:968.7px;transform:translateX(-50%);">1</div>
<div class="a" style="left:988.75px;top:614.5px;width:20px;height:22px;background:#ececec;border:2px solid #e0e6ee;border-radius:4px;box-sizing:border-box"></div>
<div class="t" style="top:619.07px;font-size:13.5px;color:#a8a8a8;font-family:'Liberation Sans',sans-serif;left:998.75px;transform:translateX(-50%);">2</div>
<div class="a" style="left:1018.8000000000001px;top:614.5px;width:20px;height:22px;background:#ececec;border:2px solid #e0e6ee;border-radius:4px;box-sizing:border-box"></div>
<div class="t" style="top:619.07px;font-size:13.5px;color:#a8a8a8;font-family:'Liberation Sans',sans-serif;left:1028.8000000000002px;transform:translateX(-50%);">3</div>
<div class="a" style="left:1048.8500000000001px;top:614.5px;width:20px;height:22px;background:#ececec;border:2px solid #e0e6ee;border-radius:4px;box-sizing:border-box"></div>
<div class="t" style="top:619.07px;font-size:13.5px;color:#a8a8a8;font-family:'Liberation Sans',sans-serif;left:1058.8500000000001px;transform:translateX(-50%);">4</div>
<div class="a" style="left:1078.9px;top:614.5px;width:20px;height:22px;background:#ececec;border:2px solid #e0e6ee;border-radius:4px;box-sizing:border-box"></div>
<div class="t" style="top:619.07px;font-size:13.5px;color:#a8a8a8;font-family:'Liberation Sans',sans-serif;left:1088.9px;transform:translateX(-50%);">5</div>
<div class="a" style="left:1108.95px;top:614.5px;width:20px;height:22px;background:#ececec;border:2px solid #e0e6ee;border-radius:4px;box-sizing:border-box"></div>
<div class="t" style="top:619.07px;font-size:13.5px;color:#a8a8a8;font-family:'Liberation Sans',sans-serif;left:1118.95px;transform:translateX(-50%);">6</div>
<div class="a" style="left:1140px;top:615.5px;width:16.5px;height:18.5px;background:#3a3acc;border:2px solid #fff;border-radius:4px;box-sizing:border-box"></div>
<div class="t" style="top:617.90px;font-size:14px;color:#ffff00;font-family:'Liberation Sans',sans-serif;left:1148.25px;transform:translateX(-50%);"><b>?</b></div>
<div class="a" style="left:1160.7px;top:615.5px;width:16.5px;height:18.5px;background:#dc143c;border:2px solid #fff;border-radius:4px;box-sizing:border-box"></div>
<div class="t" style="top:617.90px;font-size:14px;color:#fff;font-family:'Liberation Sans',sans-serif;left:1168.95px;transform:translateX(-50%);">X</div>
<div class="t" style="top:641.30px;font-size:13px;color:#3a5070;font-family:'Liberation Sans',sans-serif;left:631.4px;">Source</div>
<div class="t" style="top:641.30px;font-size:13px;color:#3a5070;font-family:'Liberation Sans',sans-serif;left:705px;">ID</div>
<div class="t" style="top:641.30px;font-size:13px;color:#3a5070;font-family:'Liberation Sans',sans-serif;letter-spacing:-0.1px;left:747.7px;">Surf/Vol</div>
<div class="a" style="left:627.7px;top:656.9px;width:48.5px;height:22px;background:#f0f0f0;border-bottom:1.5px solid #a0a0a0;border-right:1px solid #d0d0d0;border-radius:2px;box-sizing:border-box"></div>
<div class="t" style="top:661.57px;font-size:13.5px;color:#1a1a1a;font-family:'Liberation Sans',sans-serif;left:631px;">DAMIT</div>
<div class="a" style="left:679.6px;top:656.9px;width:65.6px;height:22px;background:#f0f0f0;border-bottom:1.5px solid #a0a0a0;border-right:1px solid #d0d0d0;border-radius:2px;box-sizing:border-box"></div>
<div class="t" style="top:661.57px;font-size:13.5px;color:#1a1a1a;font-family:'Liberation Sans',sans-serif;left:683px;">5575</div>
<div class="a" style="left:748.2px;top:656.9px;width:46.8px;height:22px;background:#f0f0f0;border-bottom:1.5px solid #a0a0a0;border-right:1px solid #d0d0d0;border-radius:2px;box-sizing:border-box"></div>
<div class="t" style="top:661.57px;font-size:13.5px;color:#1a1a1a;font-family:'Liberation Sans',sans-serif;left:752px;">1.040</div>
<div class="a" style="left:625px;top:681.7px;width:42px;height:25px;background:#ffff00;border:1px solid #6a6a2a;box-sizing:border-box"></div>
<div class="t" style="top:687.23px;font-size:14.5px;color:#000;font-family:'Liberation Sans',sans-serif;font-weight:bold;left:646px;transform:translateX(-50%);">Dia</div>
<div class="t" style="top:686.08px;font-size:12.9px;color:#3a5070;font-family:'Liberation Sans',sans-serif;font-style:italic;left:672.4px;">Values in memory =&gt;</div>
<div class="a" style="left:797.9px;top:640.1px;width:377px;height:60.7px;background:#fff8dc;border-top:2px solid #6e6e6e;border-left:2px solid #6e6e6e;border-bottom:1px solid #fff;border-right:1px solid #fff;box-sizing:border-box"></div>
<div class="t" style="top:642.66px;font-size:12.8px;color:#1a1a1a;font-family:'Liberation Sans',sans-serif;letter-spacing:-0.15px;left:827.8px;">Fit quality</div>
<div class="t" style="top:642.66px;font-size:12.8px;color:#1a1a1a;font-family:'Liberation Sans',sans-serif;letter-spacing:-0.2px;left:925.3px;">Ph Corn</div>
<div class="t" style="top:642.66px;font-size:12.8px;color:#1a1a1a;font-family:'Liberation Sans',sans-serif;letter-spacing:-0.3px;left:989.4px;">Minimum dia</div>
<div class="t" style="top:643.16px;font-size:12.8px;color:#1a1a1a;font-family:'Liberation Sans',sans-serif;letter-spacing:-0.3px;left:1083.9px;">Maximum dia</div>
<div class="a" style="left:801.4px;top:658.6px;width:120px;height:23.7px;background:#fff;border:1px solid #7a7a7a;border-radius:2px;box-sizing:border-box"></div>
<div class="t" style="top:664.24px;font-size:13.3px;color:#1a1a1a;font-family:'Liberation Sans',sans-serif;left:804.5px;">Not constrained</div>
<svg class="a" style="left:904px;top:666px" width="12" height="10"><path d="M1 2.5 L6 7.5 L11 2.5" fill="none" stroke="#505050" stroke-width="1.1"/></svg>
<div class="a" style="left:928px;top:658.6px;width:47.4px;height:22px;background:#f0f0f0;border-bottom:1.5px solid #a0a0a0;border-right:1px solid #d0d0d0;border-radius:2px;box-sizing:border-box"></div>
<div class="t" style="top:663.57px;font-size:13.5px;color:#1a1a1a;font-family:'Liberation Sans',sans-serif;left:930.5px;">0°</div>
<div class="a" style="left:986.2px;top:659px;width:46px;height:22.5px;background:#ffb6c1;border-bottom:1.5px solid #a0a0a0;border-right:1px solid #d0d0d0;border-radius:2px;box-sizing:border-box"></div>
<div class="a" style="left:1036.2px;top:659px;width:36px;height:27px;background:#adff2f;border:2px solid #fff;border-radius:4px;box-sizing:border-box"></div>
<div class="t" style="top:665.57px;font-size:13.5px;color:#1a1a1a;font-family:'Liberation Sans',sans-serif;left:1054.2px;transform:translateX(-50%);">Set</div>
<div class="a" style="left:1083.9px;top:659px;width:45.8px;height:22.5px;background:#ffb6c1;border-bottom:1.5px solid #a0a0a0;border-right:1px solid #d0d0d0;border-radius:2px;box-sizing:border-box"></div>
<div class="a" style="left:1133.3px;top:659px;width:36.4px;height:27px;background:#adff2f;border:2px solid #fff;border-radius:4px;box-sizing:border-box"></div>
<div class="t" style="top:665.57px;font-size:13.5px;color:#1a1a1a;font-family:'Liberation Sans',sans-serif;left:1151.5px;transform:translateX(-50%);">Set</div>
<div class="t" style="top:685.74px;font-size:13.3px;color:#7a1f8a;font-family:'Liberation Sans',sans-serif;left:803.5px;">Not constrained</div>
<div class="t" style="top:685.74px;font-size:13.3px;color:#800080;font-family:'Liberation Sans',sans-serif;left:930.6px;">0°</div>
<div class="t" style="top:685.74px;font-size:13.3px;color:#800080;font-family:'Liberation Sans',sans-serif;left:987.6px;">0</div>
<div class="t" style="top:686.69px;font-size:11px;color:#800080;font-family:'Liberation Sans',sans-serif;left:1086px;">- - - -</div>
<div class="t" style="top:706.96px;font-size:13.4px;color:#1a1a1a;font-family:'Liberation Sans',sans-serif;font-weight:bold;letter-spacing:0.69px;left:737.7px;">Chords do not provide any constraint on the SM size</div>
<div class="t" style="top:726.50px;font-size:13px;color:#3a5070;font-family:'Liberation Sans',sans-serif;left:631px;transform:scaleX(1.0);transform-origin:0 0;">Version info</div>
<div class="a" style="left:706.9px;top:722.2px;width:336px;height:22px;background:#f0f0f0;border-bottom:1.5px solid #a0a0a0;border-right:1px solid #d0d0d0;border-radius:2px;box-sizing:border-box"></div>
<div class="t" style="top:727.24px;font-size:13.3px;color:#1a1a1a;font-family:'Liberation Sans',sans-serif;left:710px;">2019-10-23, Q=1</div>
<div class="t" style="top:752.50px;font-size:13px;color:#3a5070;font-family:'Liberation Sans',sans-serif;left:630.5px;transform:scaleX(1.0);transform-origin:0 0;">Image scale</div>
<div class="a" style="left:706.9px;top:747.7px;width:337px;height:27px;background:#fff8dc;"></div>
<svg class="a" style="left:706.9px;top:752px" width="337" height="10"><g stroke="#a0a0a0" stroke-width="1"><line x1="13.2" y1="2" x2="13.2" y2="6"/><line x1="20.6" y1="2" x2="20.6" y2="6"/><line x1="28.0" y1="2" x2="28.0" y2="6"/><line x1="35.3" y1="2" x2="35.3" y2="6"/><line x1="42.7" y1="2" x2="42.7" y2="6"/><line x1="50.1" y1="2" x2="50.1" y2="6"/><line x1="57.5" y1="2" x2="57.5" y2="6"/><line x1="64.9" y1="2" x2="64.9" y2="6"/><line x1="72.2" y1="2" x2="72.2" y2="6"/><line x1="79.6" y1="2" x2="79.6" y2="6"/><line x1="87.0" y1="2" x2="87.0" y2="6"/><line x1="94.4" y1="2" x2="94.4" y2="6"/><line x1="101.8" y1="2" x2="101.8" y2="6"/><line x1="109.1" y1="2" x2="109.1" y2="6"/><line x1="116.5" y1="2" x2="116.5" y2="6"/><line x1="123.9" y1="2" x2="123.9" y2="6"/><line x1="131.3" y1="2" x2="131.3" y2="6"/><line x1="138.7" y1="2" x2="138.7" y2="6"/><line x1="146.0" y1="2" x2="146.0" y2="6"/><line x1="153.4" y1="2" x2="153.4" y2="6"/><line x1="160.8" y1="2" x2="160.8" y2="6"/><line x1="168.2" y1="2" x2="168.2" y2="6"/><line x1="175.6" y1="2" x2="175.6" y2="6"/><line x1="182.9" y1="2" x2="182.9" y2="6"/><line x1="190.3" y1="2" x2="190.3" y2="6"/><line x1="197.7" y1="2" x2="197.7" y2="6"/><line x1="205.1" y1="2" x2="205.1" y2="6"/><line x1="212.5" y1="2" x2="212.5" y2="6"/><line x1="219.8" y1="2" x2="219.8" y2="6"/><line x1="227.2" y1="2" x2="227.2" y2="6"/><line x1="234.6" y1="2" x2="234.6" y2="6"/><line x1="242.0" y1="2" x2="242.0" y2="6"/><line x1="249.4" y1="2" x2="249.4" y2="6"/><line x1="256.7" y1="2" x2="256.7" y2="6"/><line x1="264.1" y1="2" x2="264.1" y2="6"/><line x1="271.5" y1="2" x2="271.5" y2="6"/><line x1="278.9" y1="2" x2="278.9" y2="6"/><line x1="286.3" y1="2" x2="286.3" y2="6"/><line x1="293.6" y1="2" x2="293.6" y2="6"/><line x1="301.0" y1="2" x2="301.0" y2="6"/><line x1="308.4" y1="2" x2="308.4" y2="6"/><line x1="315.8" y1="2" x2="315.8" y2="6"/><line x1="324.4" y1="2" x2="324.4" y2="6"/></g></svg>
<div class="a" style="left:713px;top:766.5px;width:322px;height:4px;background:#e6e6e6;border:1px solid #d6d6d6;box-sizing:border-box;border-radius:1px"></div>
<svg class="a" style="left:876px;top:761px" width="11" height="15"><path d="M1 14 V5 L5.5 1 L10 5 V14Z" fill="#0067c0"/></svg>
<div class="a" style="left:1055.6px;top:723.5px;width:121.5px;height:52.5px;background:#ffb6c1;border:2.5px solid #fff;border-radius:4px;box-sizing:border-box"></div>
<div class="t" style="top:735.05px;font-size:15.3px;color:#b0102a;font-family:'Liberation Sans',sans-serif;font-weight:bold;left:1115.5px;transform:translateX(-50%);">Save/update</div>
<div class="t" style="top:751.05px;font-size:15.3px;color:#b0102a;font-family:'Liberation Sans',sans-serif;font-weight:bold;left:1115.5px;transform:translateX(-50%);">model 5575</div>
</body></html>
